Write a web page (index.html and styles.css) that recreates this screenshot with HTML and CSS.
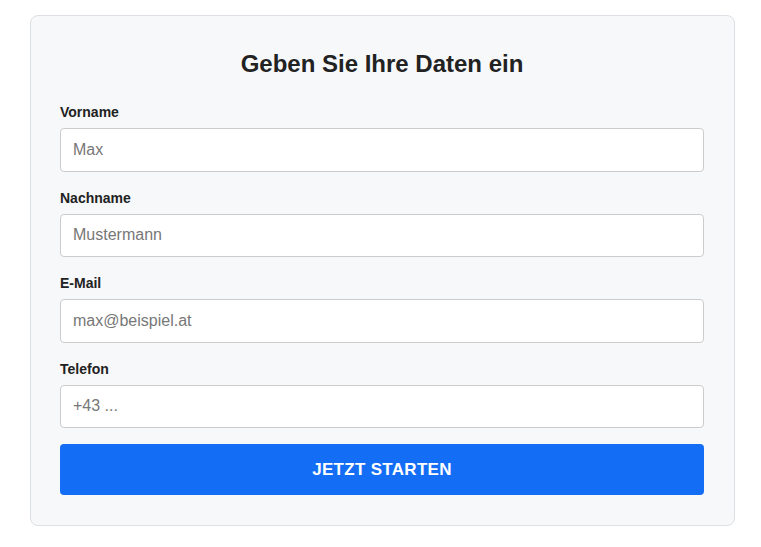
FILE: index.html
```html
<!DOCTYPE html>
<html lang="de">
<head>
<meta charset="utf-8">
<title>Daten</title>
<link rel="stylesheet" href="styles.css">
</head>
<body>
<div class="card">
  <h2 class="title">Geben Sie Ihre Daten ein</h2>
  <form class="form">
    <div class="group">
      <label class="label" for="vorname">Vorname</label>
      <input class="input" id="vorname" type="text" placeholder="Max">
    </div>
    <div class="group">
      <label class="label" for="nachname">Nachname</label>
      <input class="input" id="nachname" type="text" placeholder="Mustermann">
    </div>
    <div class="group">
      <label class="label" for="email">E-Mail</label>
      <input class="input" id="email" type="email" placeholder="max@beispiel.at">
    </div>
    <div class="group">
      <label class="label" for="tel">Telefon</label>
      <input class="input" id="tel" type="tel" placeholder="+43 ...">
    </div>
    <button class="button" type="button">JETZT STARTEN</button>
  </form>
</div>
</body>
</html>
```

FILE: styles.css
```css
html, body {
  margin: 0;
  padding: 0;
  background: #ffffff;
}

body {
  font-family: "Liberation Sans", Arial, sans-serif;
  color: #222222;
}

.card {
  box-sizing: border-box;
  width: 705px;
  margin: 15px 0 0 30px;
  padding: 30px 30px 29.5px 29px;
  background: #f7f8fa;
  border: 1px solid #dcdfe3;
  border-radius: 8px;
}

.title {
  margin: 4px 0 24px;
  font-size: 24px;
  font-weight: bold;
  text-align: center;
  color: #222222;
}

.form {
  display: flex;
  flex-direction: column;
  gap: 16px;
}

.group {
  display: flex;
  flex-direction: column;
}

.label {
  display: block;
  margin: 2px 0 8px;
  font-size: 14px;
  line-height: 16px;
  font-weight: bold;
  color: #222222;
}

.input {
  box-sizing: border-box;
  width: 100%;
  height: 43.5px;
  padding: 0 12px;
  font-family: "Liberation Sans", Arial, sans-serif;
  font-size: 16px;
  color: #222222;
  background: #ffffff;
  border: 1px solid #cccccc;
  border-radius: 4px;
  outline: none;
}

.input::placeholder {
  color: #777777;
}

.button {
  box-sizing: border-box;
  width: 100%;
  height: 51px;
  border: none;
  border-radius: 4px;
  background: #146ef5;
  color: #ffffff;
  font-family: "Liberation Sans", Arial, sans-serif;
  font-size: 17px;
  font-weight: bold;
  letter-spacing: 0.3px;
  cursor: pointer;
}
```
